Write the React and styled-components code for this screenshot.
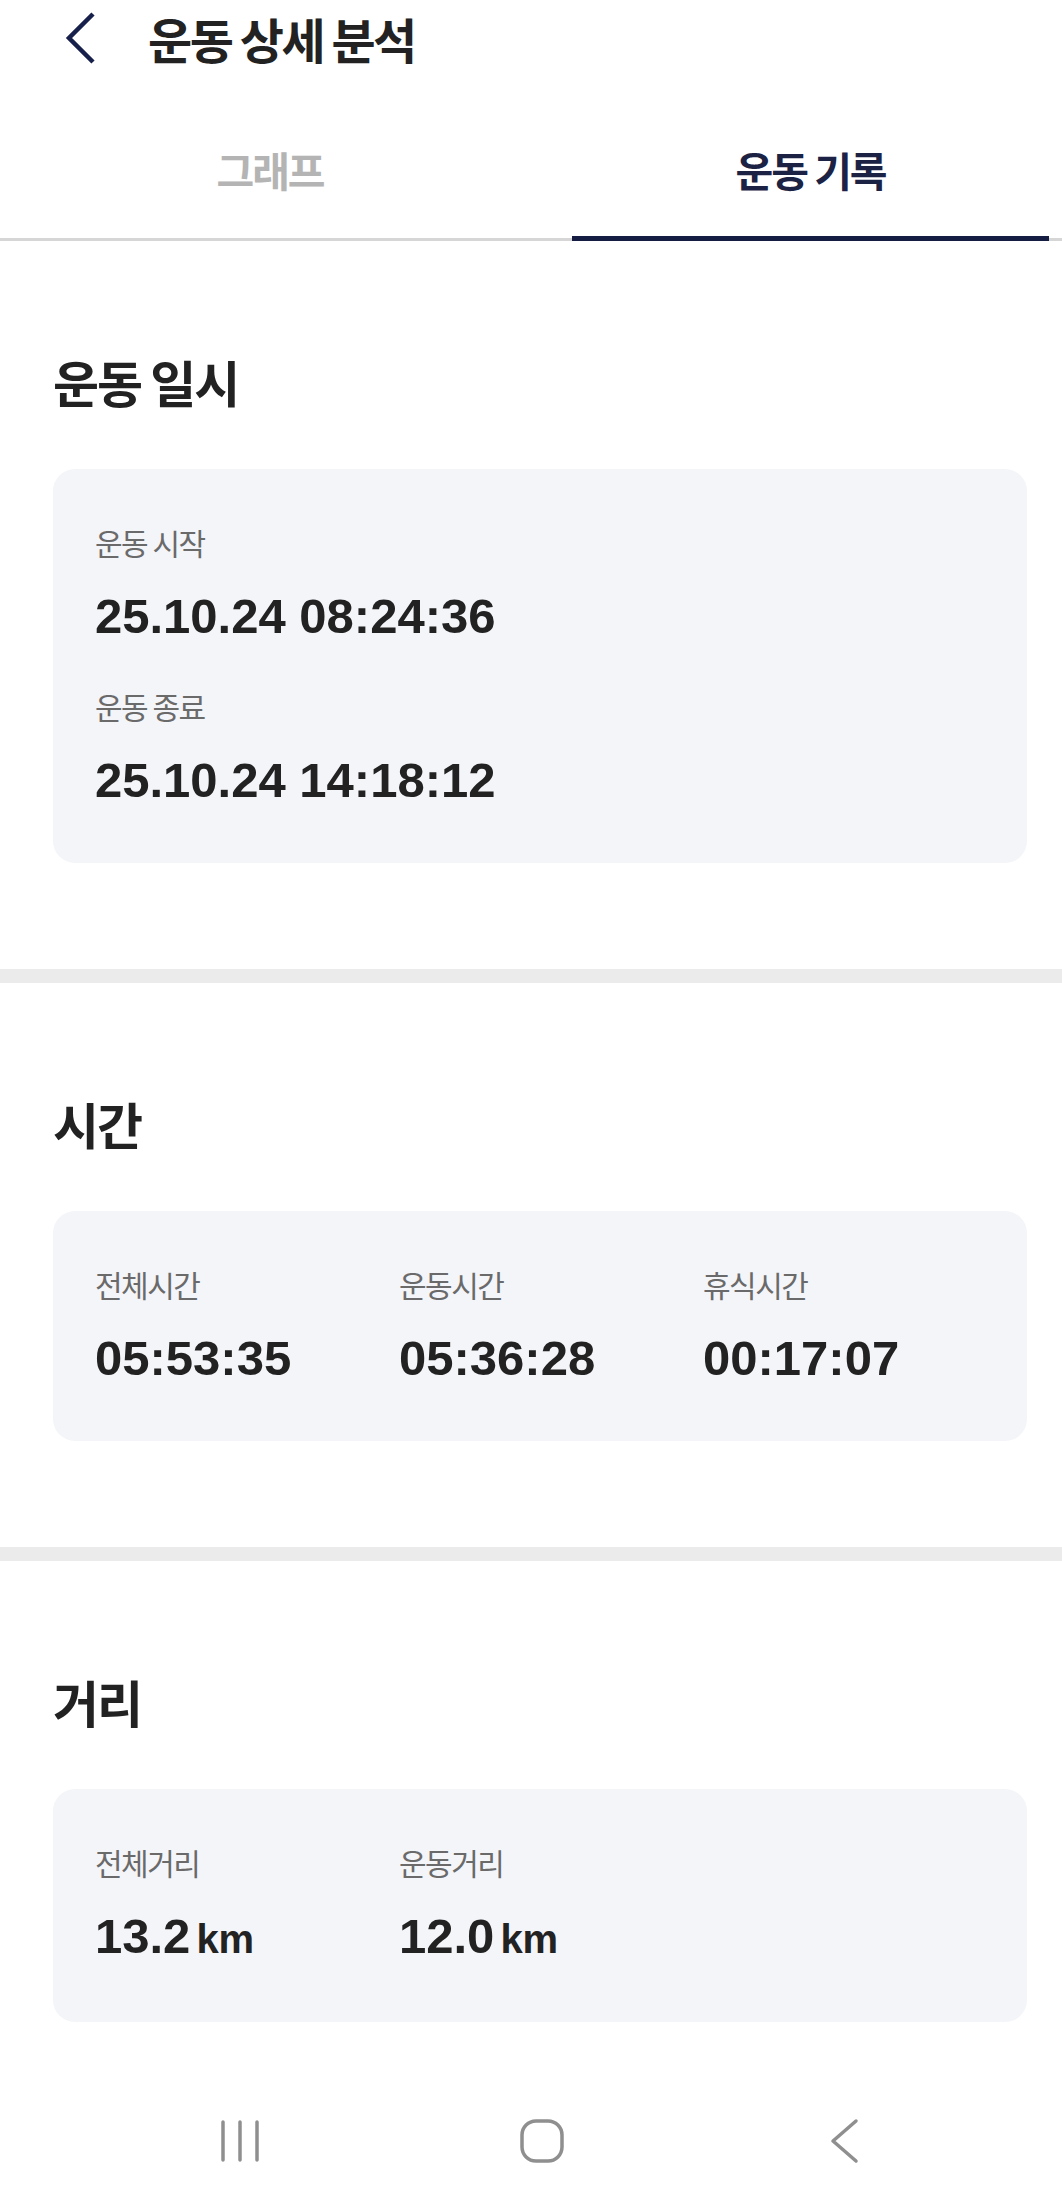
import React from 'react';
import styled, { createGlobalStyle } from 'styled-components';

// Global

const GlobalStyle = createGlobalStyle`
  body {
    margin: 0;
    background: #fff;
    font-family: "Noto Sans CJK KR", "Noto Sans", sans-serif;
    color: #222;
  }
`

// Styled Components

const Page = styled.div`
  width: 100%;
  min-height: 2206px;
  background: #fff;
`

const Header = styled.header`
  display: flex;
  align-items: center;
  height: 76px;
  padding-left: 64px;
`

const BackButton = styled.button`
  display: flex;
  align-items: center;
  padding: 0;
  margin: 0 50px 0 0;
  border: 0;
  background: none;
`

const Title = styled.h1`
  margin: 0;
  font-size: 48px;
  font-weight: 700;
  letter-spacing: -2.5px;
  line-height: 1;
  color: #222;
`

const TabBar = styled.nav`
  display: flex;
  height: 162px;
  border-bottom: 3px solid #d6d6d6;
`

const Tab = styled.div`
  position: relative;
  flex: 0 0 ${p => p.width}px;
  display: flex;
  align-items: center;
  justify-content: center;
  box-sizing: border-box;
  padding-top: 24px;
  padding-right: ${p => p.shift || 0}px;
  font-size: 41px;
  font-weight: 700;
  letter-spacing: -2px;
  color: ${p => (p.active ? '#1b2243' : '#b4b4b4')};

  &::after {
    content: '';
    display: ${p => (p.active ? 'block' : 'none')};
    position: absolute;
    left: 0;
    right: 0;
    bottom: -3px;
    height: 5px;
    background: #161d42;
  }
`

const Section = styled.section`
  padding: 110px 35px ${p => (p.last ? 0 : 106)}px 53px;
`

const SectionTitle = styled.h2`
  margin: 0 0 58px;
  font-size: 50px;
  font-weight: 700;
  letter-spacing: -2px;
  line-height: 60px;
  color: #222;
`

const Divider = styled.div`
  height: 14px;
  background: #ebebeb;
`

const Card = styled.div`
  background: #f4f5f9;
  border-radius: 22px;
  padding: 55px 42px;
  display: ${p => (p.columns ? 'grid' : 'flex')};
  flex-direction: column;
  row-gap: 44px;
  column-gap: 0;
  grid-template-columns: repeat(${p => p.columns || 1}, 304px);
`

const Stat = styled.div`
  display: flex;
  flex-direction: column;
  gap: 28px;
`

const Label = styled.span`
  font-size: 30px;
  line-height: 36px;
  letter-spacing: -1.5px;
  color: #6a6a6a;
`

const Value = styled.span`
  font-family: "Liberation Sans", Arial, sans-serif;
  font-size: 49px;
  line-height: 56px;
  font-weight: 700;
  color: #222;
  white-space: nowrap;
`

const Unit = styled.span`
  font-size: 40px;
  margin-left: 6px;
`

const NavBar = styled.div`
  display: grid;
  grid-template-columns: repeat(3, 302px);
  padding: 96px 0 0 89px;
  height: 85px;
`

const NavItem = styled.div`
  display: flex;
  justify-content: center;
  align-items: center;
  height: 46px;
`

// Icons

const ChevronLeft = () => (
  <svg width="34" height="54" viewBox="0 0 34 54" fill="none">
    <polyline points="29,3 5,27 29,51" stroke="#17204a" strokeWidth="4.5" strokeLinejoin="miter" />
  </svg>
)

const RecentsIcon = () => (
  <svg width="42" height="46" viewBox="0 0 42 46" fill="none" stroke="#8f8f8f" strokeWidth="3.5" strokeLinecap="round">
    <line x1="4" y1="4" x2="4" y2="42" />
    <line x1="21" y1="4" x2="21" y2="42" />
    <line x1="38" y1="4" x2="38" y2="42" />
  </svg>
)

const HomeIcon = () => (
  <svg width="46" height="46" viewBox="0 0 46 46" fill="none">
    <rect x="3" y="3" width="40" height="40" rx="14" stroke="#8f8f8f" strokeWidth="3.5" />
  </svg>
)

const BackIcon = () => (
  <svg width="32" height="46" viewBox="0 0 32 46" fill="none">
    <polyline points="28,3 5,23 28,43" stroke="#8f8f8f" strokeWidth="3.5" strokeLinecap="round" strokeLinejoin="round" />
  </svg>
)

// Data

const timeStats = [
  { label: '전체시간', value: '05:53:35' },
  { label: '운동시간', value: '05:36:28' },
  { label: '휴식시간', value: '00:17:07' },
]

const distanceStats = [
  { label: '전체거리', value: '13.2' },
  { label: '운동거리', value: '12.0' },
]

// App

export default function App() {
  return (
    <Page>
      <GlobalStyle />
      <Header>
        <BackButton aria-label="뒤로"><ChevronLeft /></BackButton>
        <Title>운동 상세 분석</Title>
      </Header>

      <TabBar>
        <Tab width={572} shift={32}>그래프</Tab>
        <Tab width={477} active>운동 기록</Tab>
      </TabBar>

      <Section>
        <SectionTitle>운동 일시</SectionTitle>
        <Card>
          <Stat>
            <Label>운동 시작</Label>
            <Value>25.10.24 08:24:36</Value>
          </Stat>
          <Stat>
            <Label>운동 종료</Label>
            <Value>25.10.24 14:18:12</Value>
          </Stat>
        </Card>
      </Section>

      <Divider />

      <Section>
        <SectionTitle>시간</SectionTitle>
        <Card columns={3}>
          {timeStats.map(s => (
            <Stat key={s.label}>
              <Label>{s.label}</Label>
              <Value>{s.value}</Value>
            </Stat>
          ))}
        </Card>
      </Section>

      <Divider />

      <Section last>
        <SectionTitle>거리</SectionTitle>
        <Card columns={3}>
          {distanceStats.map(s => (
            <Stat key={s.label}>
              <Label>{s.label}</Label>
              <Value>{s.value}<Unit>km</Unit></Value>
            </Stat>
          ))}
        </Card>
      </Section>

      <NavBar>
        <NavItem><RecentsIcon /></NavItem>
        <NavItem><HomeIcon /></NavItem>
        <NavItem><BackIcon /></NavItem>
      </NavBar>
    </Page>
  );
}
